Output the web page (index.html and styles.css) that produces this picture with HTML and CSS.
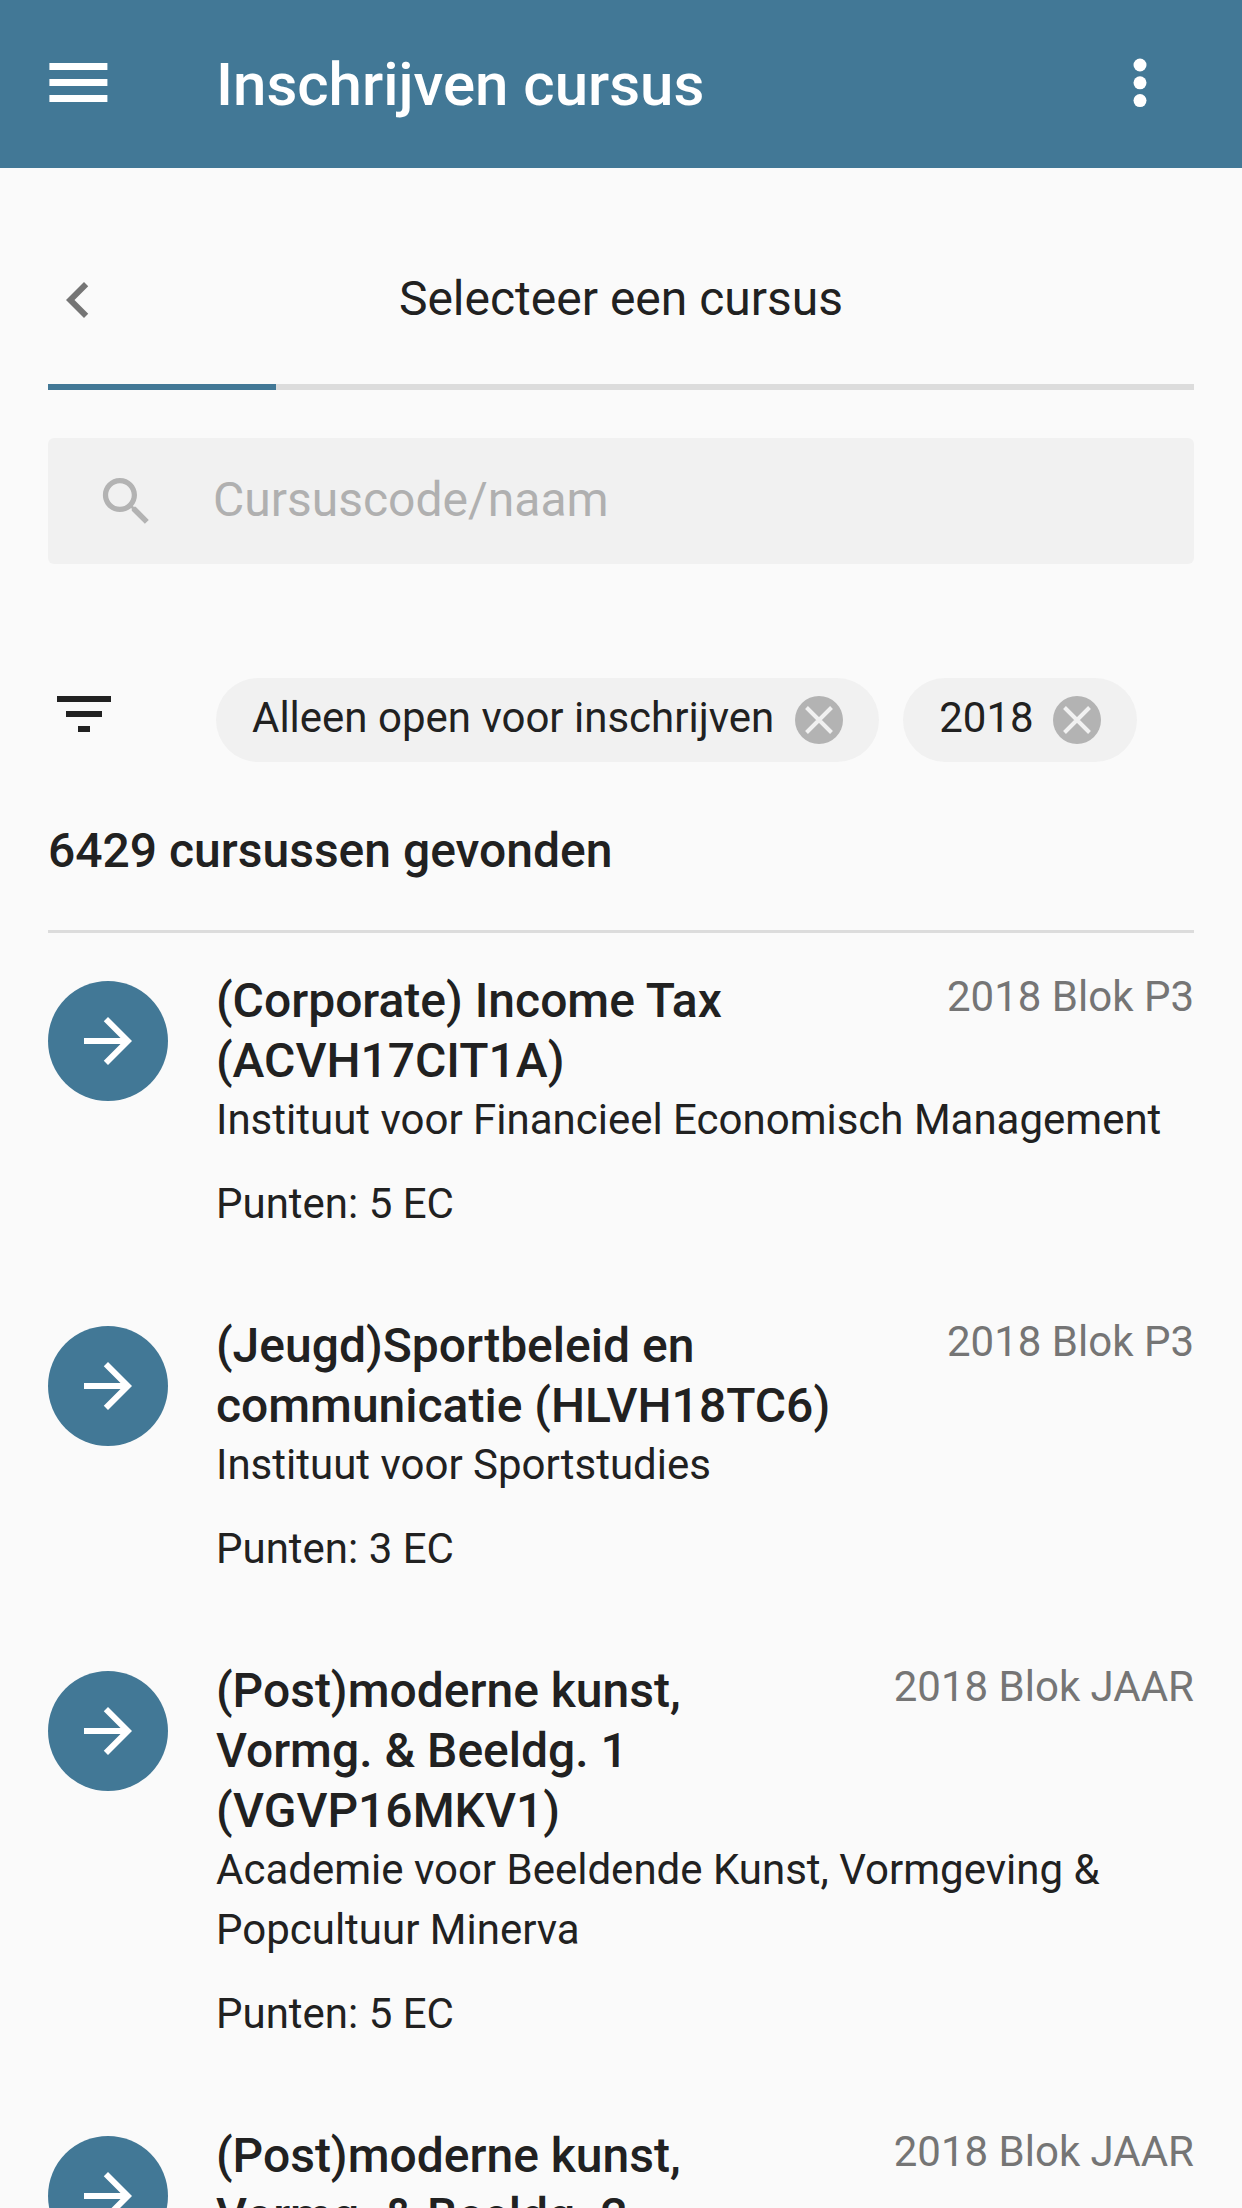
FILE: index.html
```
<!doctype html>
<html lang="nl">
<head>
  <meta charset="utf-8">
  <title>Inschrijven cursus</title>
  <link rel="stylesheet" href="styles.css">
</head>

<body>
  <svg class="sprite">
    <symbol id="arrow" viewBox="0 0 24 24">
      <path d="M12 4l-1.41 1.41L16.17 11H4v2h12.17l-5.58 5.59L12 20l8-8z"/>
    </symbol>
    <symbol id="remove" viewBox="0 0 48 48">
      <circle cx="24" cy="24" r="24" fill="#b3b3b3"/>
      <path d="M11.5 11.5l25 25M36.5 11.5l-25 25" stroke="#f1f1f1" stroke-width="4"/>
    </symbol>
  </svg>

  <header class="toolbar">
    <svg class="menu" viewBox="0 0 59 39">
      <path d="M.4 0h58v7H.4zM.4 16h58v7H.4zM.4 32h58v7H.4z"/>
    </svg>
    <h1>Inschrijven cursus</h1>
    <svg class="more" viewBox="0 0 14 50">
      <circle cx="7" cy="7" r="6.5"/>
      <circle cx="7" cy="24.8" r="6.5"/>
      <circle cx="7" cy="42.6" r="6.5"/>
    </svg>
  </header>

  <main>
    <div class="step">
      <svg class="back" viewBox="0 0 24 24">
        <path d="M15.41 7.41L14 6l-6 6 6 6 1.41-1.41L10.83 12z"/>
      </svg>
      <h2>Selecteer een cursus</h2>
    </div>
    <div class="progress"><div class="bar"></div></div>

    <div class="search">
      <svg viewBox="0 0 24 24">
        <path d="M15.5 14h-.79l-.28-.27C15.41 12.59 16 11.11 16 9.5 16 5.91 13.09 3 9.5 3S3 5.91 3 9.5 5.91 16 9.5 16c1.61 0 3.09-.59 4.23-1.57l.27.28v.79l5 4.99L20.49 19l-4.99-5zm-6 0C7.01 14 5 11.99 5 9.5S7.01 5 9.5 5 14 7.01 14 9.5 11.99 14 9.5 14z"/>
      </svg>
      <input type="text" placeholder="Cursuscode/naam">
    </div>

    <div class="filters">
      <svg class="filterIcon" viewBox="0 0 24 24">
        <path d="M10 18h4v-2h-4v2zM3 6v2h18V6H3zm3 7h12v-2H6v2z"/>
      </svg>
      <div class="chip chipOpen"><span>Alleen open voor inschrijven</span><svg><use href="#remove"/></svg></div>
      <div class="chip"><span>2018</span><svg><use href="#remove"/></svg></div>
    </div>

    <h3 class="count">6429 cursussen gevonden</h3>

    <ul class="courses">
      <li>
        <div class="go"><svg><use href="#arrow"/></svg></div>
        <div class="info">
          <div class="top">
            <h4>(Corporate) Income Tax (ACVH17CIT1A)</h4>
            <span class="period">2018 Blok P3</span>
          </div>
          <p>Instituut voor Financieel Economisch Management</p>
          <p class="points">Punten: 5 EC</p>
        </div>
      </li>
      <li>
        <div class="go"><svg><use href="#arrow"/></svg></div>
        <div class="info">
          <div class="top">
            <h4>(Jeugd)Sportbeleid en communicatie (HLVH18TC6)</h4>
            <span class="period">2018 Blok P3</span>
          </div>
          <p>Instituut voor Sportstudies</p>
          <p class="points">Punten: 3 EC</p>
        </div>
      </li>
      <li>
        <div class="go"><svg><use href="#arrow"/></svg></div>
        <div class="info">
          <div class="top">
            <h4>(Post)moderne kunst, Vormg. &amp; Beeldg. 1 (VGVP16MKV1)</h4>
            <span class="period">2018 Blok JAAR</span>
          </div>
          <p>Academie voor Beeldende Kunst, Vormgeving &amp; Popcultuur Minerva</p>
          <p class="points">Punten: 5 EC</p>
        </div>
      </li>
      <li>
        <div class="go"><svg><use href="#arrow"/></svg></div>
        <div class="info">
          <div class="top">
            <h4>(Post)moderne kunst, Vormg. &amp; Beeldg. 2</h4>
            <span class="period">2018 Blok JAAR</span>
          </div>
        </div>
      </li>
    </ul>
  </main>
</body>
</html>
```

FILE: styles.css
```
* {
  box-sizing: border-box;
}
body {
  margin: 0;
  height: 2208px;
  overflow: hidden;
  background: #fafafa;
  color: #212121;
  font-family: Roboto, sans-serif;
  font-size: 42px;
  line-height: 60px;
}
h1, h2, h3, h4, p, ul {
  margin: 0;
  padding: 0;
  font-weight: 500;
}
p, ul {
  font-weight: 400;
}
svg {
  display: block;
  flex: none;
}
.sprite {
  display: none;
}

/* toolbar */
.toolbar {
  display: flex;
  align-items: center;
  height: 168px;
  padding: 0 95px 0 49px;
  background: #427896;
  color: #fff;
  fill: #fff;
}
.toolbar h1 {
  flex: 1;
  margin-left: 108px;
  padding-top: 2px;
  font-size: 60px;
  line-height: 72px;
}
.menu {
  width: 59px;
  height: 39px;
  margin-bottom: 3px;
}
.more {
  width: 14px;
  height: 50px;
  margin-bottom: 2px;
}

main {
  padding: 0 48px;
}

/* step header */
.step {
  display: grid;
  grid-template-columns: 72px 1fr 72px;
  align-items: center;
  height: 216px;
  padding-top: 48px;
}
.step h2 {
  padding-bottom: 2px;
  font-size: 48px;
  font-weight: 400;
  text-align: center;
}
.back {
  width: 72px;
  height: 72px;
  margin-left: -6px;
  fill: #757575;
}
.progress {
  height: 6px;
  background: #dcdcdc;
}
.bar {
  width: 228px;
  height: 6px;
  background: #427896;
}

/* search field */
.search {
  display: flex;
  align-items: center;
  height: 126px;
  margin-top: 48px;
  padding-left: 47px;
  border-radius: 6px;
  background: #f1f1f1;
}
.search svg {
  width: 63px;
  height: 63px;
  fill: #b3b3b3;
}
.search input {
  flex: 1;
  margin-left: 55px;
  padding: 0 0 2px;
  border: 0;
  outline: none;
  background: none;
  font: 48px/60px Roboto, sans-serif;
}
.search input::placeholder {
  color: #b0b0b0;
}

/* filter chips */
.filters {
  display: flex;
  gap: 24px;
  margin-top: 114px;
}
.filterIcon {
  width: 72px;
  height: 72px;
  margin-right: 72px;
  fill: #212121;
}
.chip {
  display: flex;
  align-items: center;
  gap: 19px;
  height: 84px;
  padding: 0 36px;
  border-radius: 42px;
  background: #f1f1f1;
}
.chipOpen {
  gap: 21px;
}
.chip span {
  margin-bottom: 4px;
}
.chip svg {
  width: 48px;
  height: 48px;
}

.count {
  margin-top: 59px;
  padding-bottom: 49px;
  border-bottom: 3px solid #dcdcdc;
  font-size: 48px;
}

/* course list */
.courses {
  padding-top: 38px;
  list-style: none;
}
.courses li {
  display: flex;
  gap: 48px;
  padding-bottom: 82px;
}
.go {
  display: flex;
  flex: none;
  align-items: center;
  justify-content: center;
  width: 120px;
  height: 120px;
  margin-top: 10px;
  border-radius: 50%;
  background: #427896;
}
.go svg {
  width: 72px;
  height: 72px;
  fill: #fff;
}
.info {
  flex: 1;
}
.top {
  display: flex;
  justify-content: space-between;
  gap: 48px;
  margin-bottom: -1px;
}
.top h4 {
  font-size: 48px;
}
.period {
  flex: none;
  margin-top: -4px;
  color: #757575;
}
.info .points {
  margin-top: 24px;
}
```
